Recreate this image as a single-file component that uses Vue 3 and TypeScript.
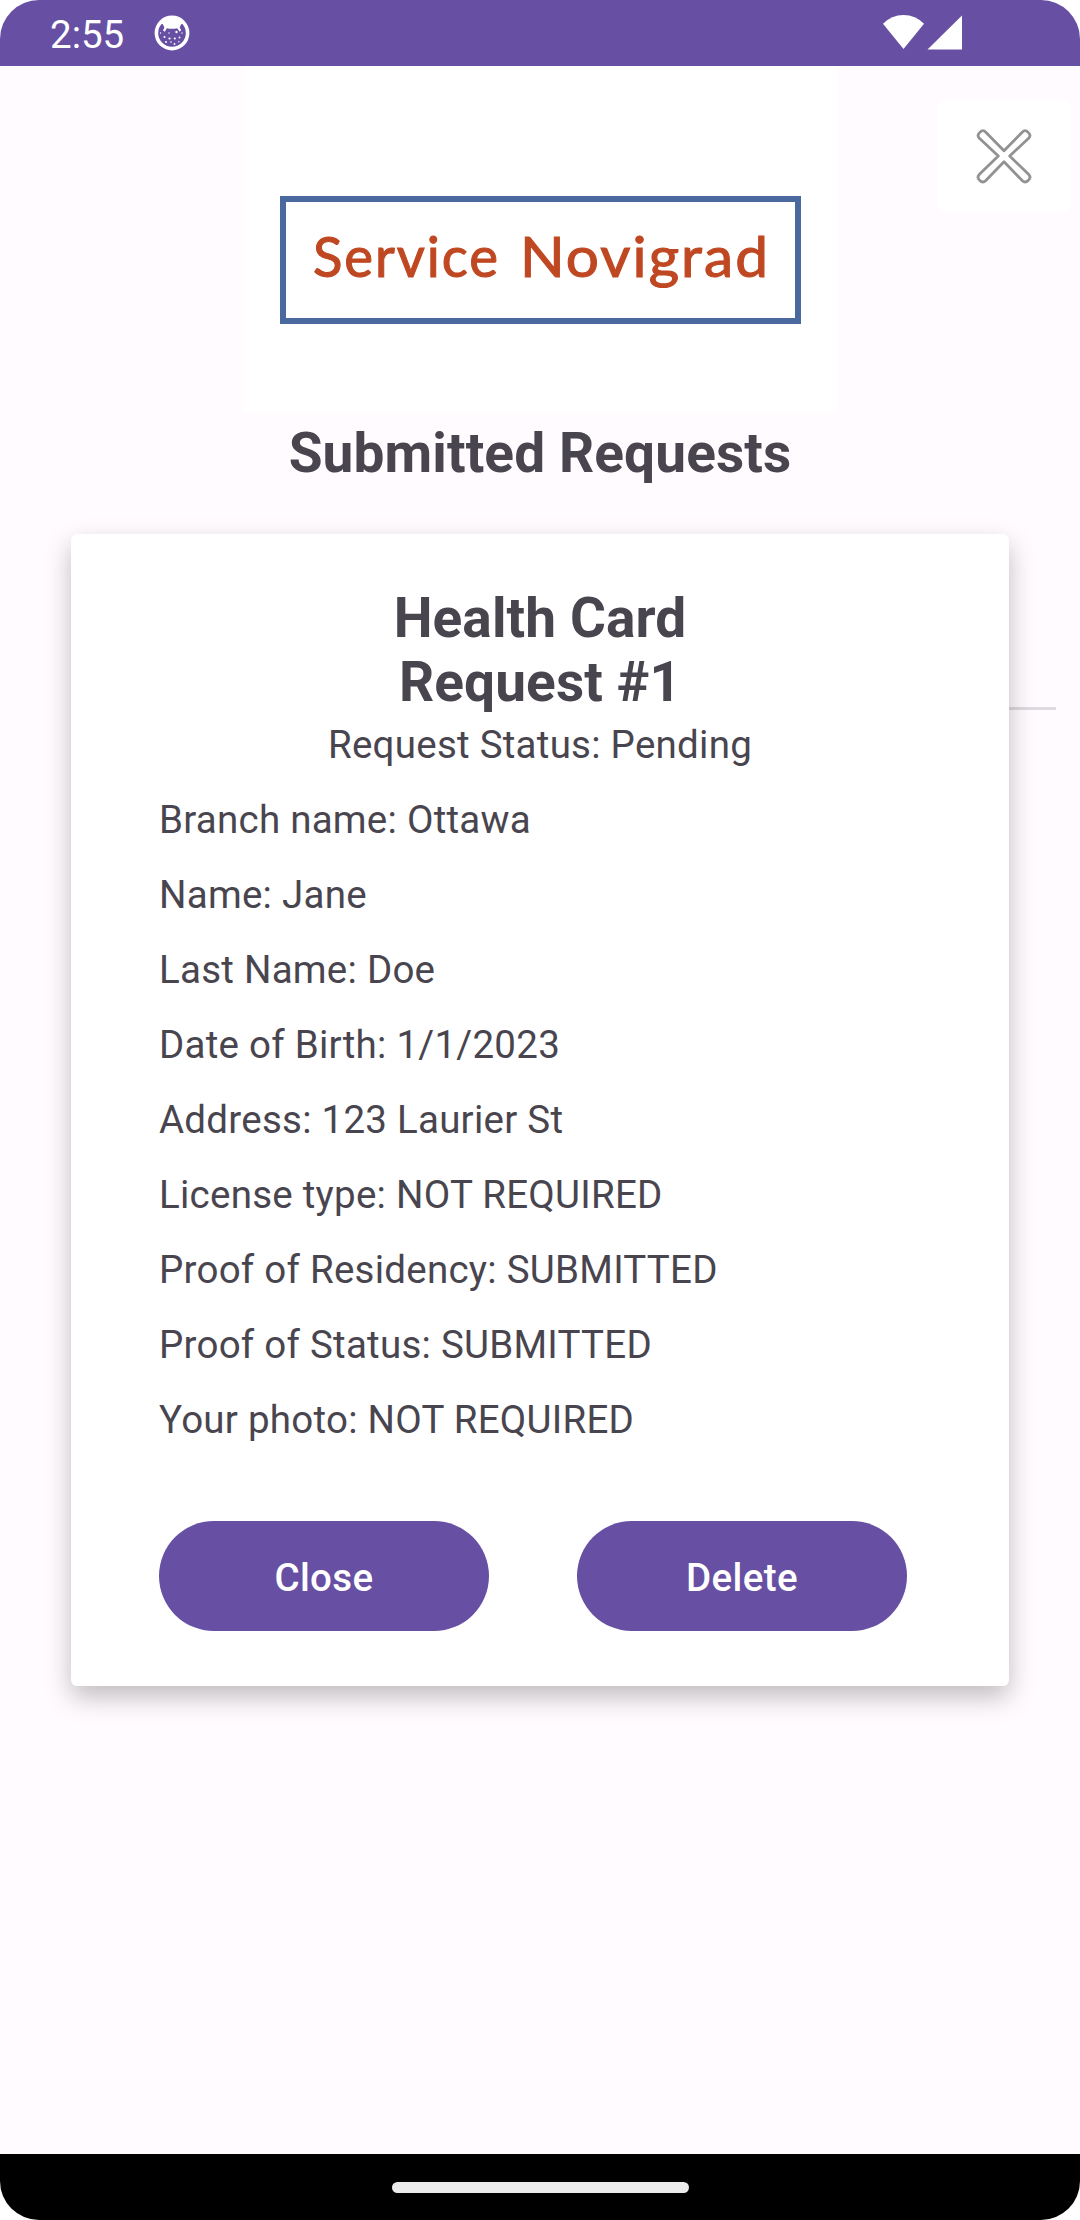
<script setup lang="ts">
interface Detail {
  label: string
  value: string
}

const details: Detail[] = [
  { label: 'Branch name', value: 'Ottawa' },
  { label: 'Name', value: 'Jane' },
  { label: 'Last Name', value: 'Doe' },
  { label: 'Date of Birth', value: '1/1/2023' },
  { label: 'Address', value: '123 Laurier St' },
  { label: 'License type', value: 'NOT REQUIRED' },
  { label: 'Proof of Residency', value: 'SUBMITTED' },
  { label: 'Proof of Status', value: 'SUBMITTED' },
  { label: 'Your photo', value: 'NOT REQUIRED' },
]
</script>

<template>
  <div class="screen">
    <header class="status-bar">
      <span class="clock">2:55</span>
      <svg class="badge" width="36" height="36" viewBox="0 0 36 36">
        <circle cx="18" cy="18" r="15.6" fill="none" stroke="#fff" stroke-width="3.6" />
        <path
          fill="#fff"
          d="M7 8 Q11 1 18 1 Q25 1 29 8 L27 9.5 L25.6 12.5 L27.2 15 L25.8 16.8 L23.2 13.2 Q18 14.4 12.8 13.2 L10.8 16.8 L9 15.4 L10.4 12.5 L9 9.5 Z"
        />
        <g fill="#fff">
          <circle cx="10.5" cy="22" r="1" /><circle cx="15.5" cy="23.5" r="1.1" />
          <circle cx="22.5" cy="17" r="1.2" /><circle cx="20.8" cy="23.5" r="1.1" />
          <circle cx="12" cy="27" r="1" /><circle cx="17" cy="27" r=".8" />
          <circle cx="25.5" cy="22.5" r=".9" /><circle cx="28" cy="18" r=".7" />
          <circle cx="6.5" cy="18" r=".7" /><circle cx="15" cy="18" r=".7" />
          <circle cx="20.5" cy="29" r=".9" /><circle cx="24.8" cy="26.7" r=".7" />
        </g>
      </svg>
      <svg class="signals" width="80" height="36" viewBox="0 0 80 36">
        <path fill="#fff" d="M0 9.8 Q8.5 1 20.5 1 Q32.5 1 41 9.8 L20.5 35 Z" />
        <path fill="#fff" d="M44.5 35.5 L79 1.5 V35.5 Z" />
      </svg>
    </header>

    <main class="content">
      <div class="logo">
        <div class="logo-frame">
          <svg width="509" height="116" viewBox="0 0 509 116">
            <text class="logo-text" x="27" y="75" textLength="187" lengthAdjust="spacingAndGlyphs">Service</text>
            <text class="logo-text" x="234" y="75" textLength="250" lengthAdjust="spacingAndGlyphs">Novigrad</text>
          </svg>
        </div>
      </div>
      <button class="dismiss" aria-label="Close">
        <svg width="60" height="60" viewBox="0 0 60 60">
          <path
            fill="#fff"
            stroke="#929292"
            stroke-width="2.8"
            stroke-linejoin="round"
            d="M30 24.7 L48.2 6.2 Q51 3.2 54 6.2 Q57.6 9.3 54.6 12.2 L35.7 30 L54.8 48.6 Q57.4 51.4 54.4 54.2 Q51.3 57.4 48.4 54.8 L30 35.7 L11.6 54.8 Q8.7 57.4 5.6 54.2 Q2.6 51.4 5.2 48.6 L24.3 30 L5.4 12.2 Q2.4 9.3 6 6.2 Q9 3.2 11.8 6.2 Z"
          />
        </svg>
      </button>
      <h1 class="page-title">Submitted Requests</h1>
      <div class="divider"></div>

      <section class="card">
        <h2 class="card-title">Health Card<br />Request #1</h2>
        <p class="status">Request Status: Pending</p>
        <ul class="details">
          <li v-for="item in details" :key="item.label">{{ item.label }}: {{ item.value }}</li>
        </ul>
        <div class="actions">
          <button class="action">Close</button>
          <button class="action">Delete</button>
        </div>
      </section>
    </main>

    <footer class="nav-bar"><span class="handle"></span></footer>
  </div>
</template>

<style>
body {
  margin: 0;
  background: #fff;
}
</style>

<style scoped>
.screen {
  display: flex;
  flex-direction: column;
  width: 1080px;
  height: 2220px;
  overflow: hidden;
  border-radius: 39px;
  background: #fffbff;
  color: #49454f;
  font-family: Roboto, sans-serif;
}
.status-bar {
  display: flex;
  flex: none;
  box-sizing: border-box;
  height: 66px;
  padding: 0 117px 0 50px;
  background: #6750a3;
}
.clock {
  width: 75px;
  padding-top: 12px;
  color: #fff;
  font-size: 38.5px;
  line-height: 45px;
}
.badge {
  margin: 15px 0 0 28.5px;
}
.signals {
  margin: 14px 0 0 auto;
}
.content {
  position: relative;
  display: flex;
  flex: 1;
  flex-direction: column;
  align-items: center;
}
.logo {
  box-sizing: border-box;
  width: 593px;
  height: 347px;
  padding: 130px 36px 0;
  background: #fff;
}
.logo-frame {
  box-sizing: border-box;
  height: 128px;
  border: 6px solid #4a699f;
}
.logo-frame svg {
  display: block;
}
.logo-text {
  fill: #bf4822;
  stroke: #bf4822;
  stroke-width: 1.1px;
  font-family: Lato, sans-serif;
  font-size: 57px;
  letter-spacing: 2px;
}
.dismiss {
  position: absolute;
  top: 35px;
  right: 10px;
  display: flex;
  align-items: center;
  justify-content: center;
  width: 132px;
  height: 110px;
  padding: 0;
  border: 0;
  border-radius: 5px;
  background: #fff;
}
.page-title,
.card-title {
  margin: 0;
  font-size: 55px;
  font-weight: 700;
  line-height: 64px;
  letter-spacing: 0.1px;
  text-align: center;
}
.page-title {
  margin-top: 8px;
}
.divider {
  position: absolute;
  top: 641px;
  right: 24px;
  width: 516px;
  height: 3px;
  background: #dedae0;
}
.card {
  position: relative;
  box-sizing: border-box;
  width: 938px;
  height: 1152px;
  margin-top: 49px;
  padding: 52px 88px 0;
  border-radius: 6px;
  background: #fff;
  box-shadow: 0 11px 26px rgba(0, 0, 0, 0.25);
}
.status,
.details {
  font-size: 38.5px;
  line-height: 45px;
  letter-spacing: 0.25px;
}
.status {
  margin: 8px 0 0;
  text-align: center;
}
.details {
  display: flex;
  flex-direction: column;
  gap: 30px;
  margin: 30px 0 0;
  padding: 0;
  list-style: none;
}
.actions {
  display: flex;
  gap: 88px;
  margin-top: 79px;
}
.action {
  width: 330px;
  height: 110px;
  padding: 2px 0 0;
  border: 0;
  border-radius: 55px;
  background: #6750a3;
  color: #fff;
  font: 500 38.5px/45px Roboto, sans-serif;
  letter-spacing: 0.4px;
}
.nav-bar {
  display: flex;
  flex: none;
  align-items: center;
  justify-content: center;
  height: 66px;
  background: #000;
}
.handle {
  width: 297px;
  height: 11px;
  border-radius: 5.5px;
  background: #ebebeb;
}
</style>
